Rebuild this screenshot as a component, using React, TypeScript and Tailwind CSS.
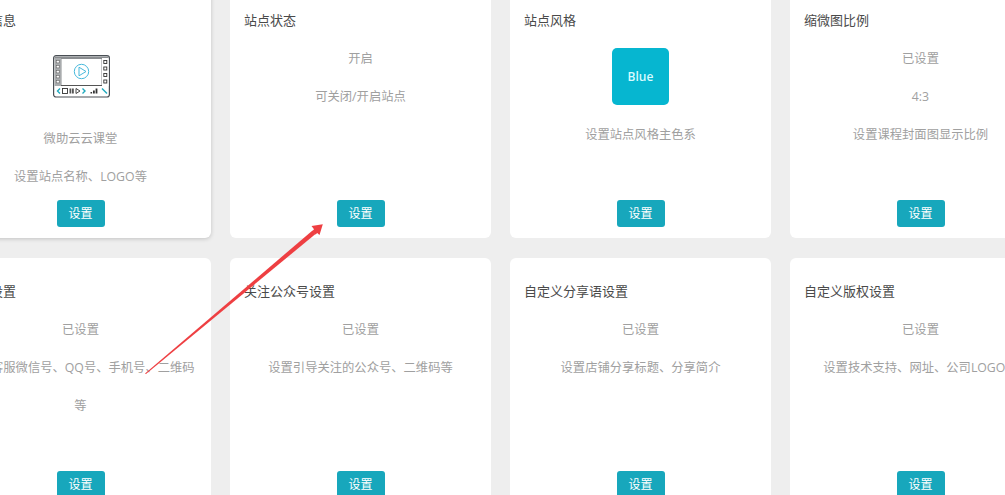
const font = "font-['Open_Sans','Noto_Sans_CJK_SC',sans-serif]";

function VideoIcon() {
  return (
    <svg width="57" height="43" viewBox="0 0 57 43" fill="none">
      <rect x="0.6" y="0.6" width="55.8" height="41.4" rx="2.5" stroke="#4a4f55" strokeWidth="1.2" />
      <rect x="1.5" y="1.5" width="54" height="2.4" fill="#8a8d90" />
      <rect x="8" y="3.5" width="41" height="27" stroke="#8a8d90" strokeWidth="1" />
      <path d="M8 30.5H49" stroke="#555" strokeWidth="1" />
      <rect x="1.5" y="3" width="6.5" height="28" fill="#a9acae" />
      <rect x="49" y="3" width="6.5" height="28" fill="#fff" />
      {[5.5, 10.5, 15.5, 20.5, 25.5].map((y) => (
        <rect key={y} x="3.2" y={y} width="3" height="2.4" fill="#fff" stroke="#555" strokeWidth="0.5" />
      ))}
      {[5.5, 12, 18.5, 25].map((y) => (
        <rect key={y} x="50.8" y={y} width="3" height="3" fill="#fff" stroke="#333" strokeWidth="0.9" />
      ))}
      <circle cx="28.5" cy="16.5" r="7.2" stroke="#47b9dc" strokeWidth="1" />
      <path d="M26 12.2L33 16.5L26 20.8Z" stroke="#47b9dc" strokeWidth="1" strokeLinejoin="round" />
      <path d="M7 33.5L4.5 36L7 38.5" stroke="#1fa9bd" strokeWidth="1.4" />
      <rect x="9.5" y="33.5" width="5" height="5" stroke="#333" strokeWidth="0.9" />
      <rect x="16.5" y="33.5" width="1.8" height="5" fill="#555" />
      <rect x="19" y="33.5" width="1.8" height="5" fill="#555" />
      <path d="M23 33.5L27 36L23 38.5Z" stroke="#333" strokeWidth="0.9" />
      <path d="M29.5 33.5L32 36L29.5 38.5" stroke="#1fa9bd" strokeWidth="1.4" />
      <path d="M37.5 38.5h1.6v-1.6h-1.6zM40 38.5h1.8v-3H40zM42.6 38.5h1.8v-5h-1.8z" fill="#333" />
      <path d="M49 33.5L54 38.5" stroke="#1fa9bd" strokeWidth="1.4" />
    </svg>
  );
}

type CardData = {
  title: string;
  lines: string[];
  media?: "video" | "blue";
};

const cards: CardData[] = [
  { title: "站点信息", lines: ["微助云云课堂", "设置站点名称、LOGO等"], media: "video" },
  { title: "站点状态", lines: ["开启", "可关闭/开启站点"] },
  { title: "站点风格", lines: ["设置站点风格主色系"], media: "blue" },
  { title: "缩微图比例", lines: ["已设置", "4:3", "设置课程封面图显示比例"] },
  { title: "客服设置", lines: ["已设置", "设置客服微信号、QQ号、手机号、二维码等"] },
  { title: "关注公众号设置", lines: ["已设置", "设置引导关注的公众号、二维码等"] },
  { title: "自定义分享语设置", lines: ["已设置", "设置店铺分享标题、分享简介"] },
  { title: "自定义版权设置", lines: ["已设置", "设置技术支持、网址、公司LOGO等"] },
];

function Card({ card, raised }: { card: CardData; raised: boolean }) {
  return (
    <div
      className={`flex h-[251px] flex-col rounded-[6px] bg-white px-[15px] pb-[11px] pt-[24px] ${
        raised ? "shadow-[0_1px_4px_rgba(0,0,0,0.18)]" : ""
      }`}
    >
      <h3 className="-ml-[1px] text-[13px] font-normal leading-[18px] text-[#4a4a4a]">{card.title}</h3>
      {card.media === "video" && (
        <div className="mt-[26px] mb-[16px] ml-[1px] flex h-[49px] justify-center">
          <VideoIcon />
        </div>
      )}
      {card.media === "blue" && (
        <div className="mt-[19px] mb-[11px] flex h-[57px] w-[57px] items-center justify-center self-center rounded-[5px] bg-[#06b6d0] text-[12px] font-semibold text-[#d8fbff]">
          Blue
        </div>
      )}
      <div className={card.media ? "" : "mt-[11px]"}>
        {card.lines.map((line) => (
          <p key={line} className="text-center text-[12.3px] leading-[38px] text-[#a0a0a0]">
            {line}
          </p>
        ))}
      </div>
      <button className="mt-auto h-[27px] w-[48px] self-center rounded-[3px] bg-[#17a7bc] text-[12px] text-white">
        设置
      </button>
    </div>
  );
}

export default function App() {
  return (
    <div className={`relative h-[495px] w-[1005px] overflow-hidden bg-[#eeeeee] ${font}`}>
      <div className="-ml-[50px] -mt-[13px] grid w-[1101px] grid-cols-[repeat(4,261px)] gap-x-[19px] gap-y-[20px]">
        {cards.map((card, i) => (
          <Card key={card.title} card={card} raised={i === 0} />
        ))}
      </div>
      {/* annotation arrow drawn over the page */}
      <svg className="pointer-events-none absolute left-0 top-0" width="1005" height="495" viewBox="0 0 1005 495">
        <polygon points="145,373.5 312.5,230.5 315.5,234 146,374" fill="#ee3f42" />
        <polygon points="322.8,224.2 311.5,226 314,229.2 312.5,231 315.5,234.5 317.2,233 319.5,235" fill="#ee3f42" />
      </svg>
    </div>
  );
}
